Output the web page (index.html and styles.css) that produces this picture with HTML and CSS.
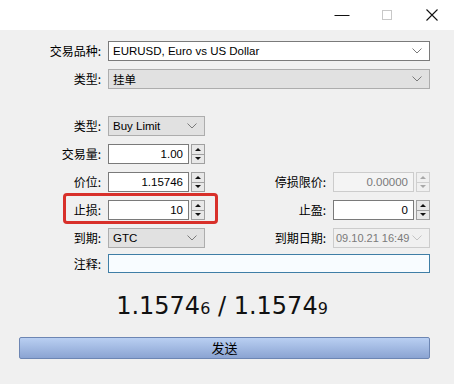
FILE: index.html
```html
<!DOCTYPE html>
<html lang="zh-CN">

<head>
    <meta charset="UTF-8">
    <title>新订单</title>
    <link rel="stylesheet" href="styles.css">
</head>

<body>
    <div class="window">
        <div class="titlebar">
            <span class="tb-btn">
                <svg width="16" height="16" viewBox="0 0 16 16"><path d="M0.5 8.5h15" stroke="#111" stroke-width="1"/></svg>
            </span>
            <span class="tb-btn">
                <svg width="16" height="16" viewBox="0 0 16 16"><rect x="3.5" y="3.5" width="9" height="9" fill="none" stroke="#c8c8c8"/></svg>
            </span>
            <span class="tb-btn">
                <svg width="16" height="16" viewBox="0 0 16 16"><path d="M2.5 2.5l11 11M13.5 2.5l-11 11" stroke="#111" stroke-width="1.1"/></svg>
            </span>
        </div>

        <div class="content">
            <div class="form">
                <span class="lbl">交易品种:</span>
                <div class="select white span3">
                    <span class="val">EURUSD, Euro vs US Dollar</span>
                    <svg class="chev" width="10" height="6" viewBox="0 0 10 6"><path d="M0.5 0.5l4.5 4.5 4.5-4.5" fill="none" stroke="#7a7a7a"/></svg>
                </div>

                <span class="lbl">类型:</span>
                <div class="select gray span3">
                    <span class="val">挂单</span>
                    <svg class="chev" width="10" height="6" viewBox="0 0 10 6"><path d="M0.5 0.5l4.5 4.5 4.5-4.5" fill="none" stroke="#7a7a7a"/></svg>
                </div>

                <div class="spacer"></div>

                <span class="lbl">类型:</span>
                <div class="select gray">
                    <span class="val">Buy Limit</span>
                    <svg class="chev" width="10" height="6" viewBox="0 0 10 6"><path d="M0.5 0.5l4.5 4.5 4.5-4.5" fill="none" stroke="#7a7a7a"/></svg>
                </div>
                <span></span><span></span>

                <span class="lbl">交易量:</span>
                <div class="spin">
                    <span class="num">1.00</span>
                    <span class="arrows"><i class="up"></i><i class="down"></i></span>
                </div>
                <span></span><span></span>

                <span class="lbl">价位:</span>
                <div class="spin">
                    <span class="num">1.15746</span>
                    <span class="arrows"><i class="up"></i><i class="down"></i></span>
                </div>
                <span class="lbl">停损限价:</span>
                <div class="spin off">
                    <span class="num">0.00000</span>
                    <span class="arrows"><i class="up"></i><i class="down"></i></span>
                </div>

                <span class="lbl">止损:</span>
                <div class="spin">
                    <span class="num">10</span>
                    <span class="arrows"><i class="up"></i><i class="down"></i></span>
                </div>
                <span class="lbl">止盈:</span>
                <div class="spin">
                    <span class="num">0</span>
                    <span class="arrows"><i class="up"></i><i class="down"></i></span>
                </div>

                <span class="lbl">到期:</span>
                <div class="select gray">
                    <span class="val">GTC</span>
                    <svg class="chev" width="10" height="6" viewBox="0 0 10 6"><path d="M0.5 0.5l4.5 4.5 4.5-4.5" fill="none" stroke="#7a7a7a"/></svg>
                </div>
                <span class="lbl">到期日期:</span>
                <div class="select off">
                    <span class="val">09.10.21 16:49</span>
                    <svg class="chev" width="10" height="6" viewBox="0 0 10 6"><path d="M0.5 0.5l4.5 4.5 4.5-4.5" fill="none" stroke="#c4c4c4"/></svg>
                </div>

                <span class="lbl last">注释:</span>
                <div class="comment span3 last"></div>

                <!-- 红框标注 -->
                <div class="mark"></div>
            </div>

            <div class="quote">1.1574<small>6</small> / 1.1574<small>9</small></div>

            <div class="send">发送</div>
        </div>
    </div>
</body>

</html>
```

FILE: styles.css
```css
* {
    margin: 0;
    padding: 0;
    box-sizing: border-box;
}

body {
    background: #f0f0f0;
    font-family: "Liberation Sans", "Noto Sans CJK SC", sans-serif;
    font-size: 12px;
    color: #000;
}

.window {
    width: 454px;
    height: 384px;
}

.titlebar {
    height: 30px;
    background: #fff;
    display: flex;
    justify-content: flex-end;
    align-items: center;
}

.tb-btn {
    width: 45px;
    height: 30px;
    display: flex;
    align-items: center;
    justify-content: center;
}

.content {
    padding-top: 11px;
}

.form {
    position: relative;
    display: grid;
    grid-template-columns: 108px 97px 128px 97px;
    grid-template-rows: 20px 20px 11px repeat(5, 20px) 19px;
    row-gap: 8px;
}

.form .last {
    margin-top: -2px;
    margin-bottom: 2px;
}

.lbl {
    font-family: "Noto Sans CJK SC", sans-serif;
    text-align: right;
    padding-right: 7px;
    line-height: 20px;
    white-space: nowrap;
}

.span3 {
    grid-column: 2 / 5;
}

.spacer {
    grid-column: 1 / 5;
}

.select {
    display: flex;
    align-items: center;
    justify-content: space-between;
    padding: 0 4px;
    border: 1px solid #adadad;
    height: 20px;
}

.select.white {
    background: #fff;
    border-color: #7a7a7a;
}

.select.gray {
    background: #e1e1e1;
}

.select.off {
    background: #f0f0f0;
    border-color: #cccccc;
    color: #7a7a7a;
    padding-left: 2px;
}

.select.off .val {
    font-size: 11px;
}

.val {
    font-size: 11.5px;
    white-space: nowrap;
}

.chev {
    margin-right: 3px;
    flex-shrink: 0;
}

.spin {
    display: flex;
    gap: 2px;
    height: 20px;
}

.num {
    flex: 1;
    background: #fff;
    border: 1px solid #7a7a7a;
    text-align: right;
    padding-right: 5px;
    font-size: 11.5px;
    line-height: 18px;
}

.spin.off .num {
    background: #f4f4f4;
    border-color: #cccccc;
    color: #7a7a7a;
}

.arrows {
    width: 14px;
    display: flex;
    flex-direction: column;
    border: 1px solid #a0a0a0;
    background: #e8e8e8;
}

.arrows i {
    flex: 1;
    display: flex;
    align-items: center;
    justify-content: center;
}

.arrows i.up {
    border-bottom: 1px solid #a0a0a0;
}

.arrows i::after {
    content: "";
    border-left: 3px solid transparent;
    border-right: 3px solid transparent;
}

.arrows i.up::after {
    border-bottom: 3px solid #111;
}

.arrows i.down::after {
    border-top: 3px solid #111;
}

.spin.off .arrows {
    border-color: #d0d0d0;
    background: #f0f0f0;
}

.spin.off .arrows i.up {
    border-bottom-color: #d0d0d0;
}

.spin.off .arrows i.up::after {
    border-bottom-color: #a8a8a8;
}

.spin.off .arrows i.down::after {
    border-top-color: #a8a8a8;
}

.comment {
    background: #f8fcff;
    border: 1px solid #3f7ea6;
}

.mark {
    position: absolute;
    left: 63px;
    top: 152px;
    width: 155px;
    height: 31px;
    border: 3px solid #d8302a;
    border-radius: 4px;
}

.quote {
    margin-top: 14px;
    text-align: center;
    font-family: "DejaVu Sans", sans-serif;
    font-size: 24px;
    line-height: 34px;
    color: #111;
    padding-right: 10px;
}

.quote small {
    font-size: 16px;
}

.send {
    margin: 11px 24px 0 19px;
    height: 22px;
    border: 1px solid #6d86b3;
    border-radius: 2px;
    background: linear-gradient(#b9cff2, #8ba4d2);
    text-align: center;
    font-family: "Noto Sans CJK SC", sans-serif;
    font-size: 13px;
    line-height: 20px;
}
```
